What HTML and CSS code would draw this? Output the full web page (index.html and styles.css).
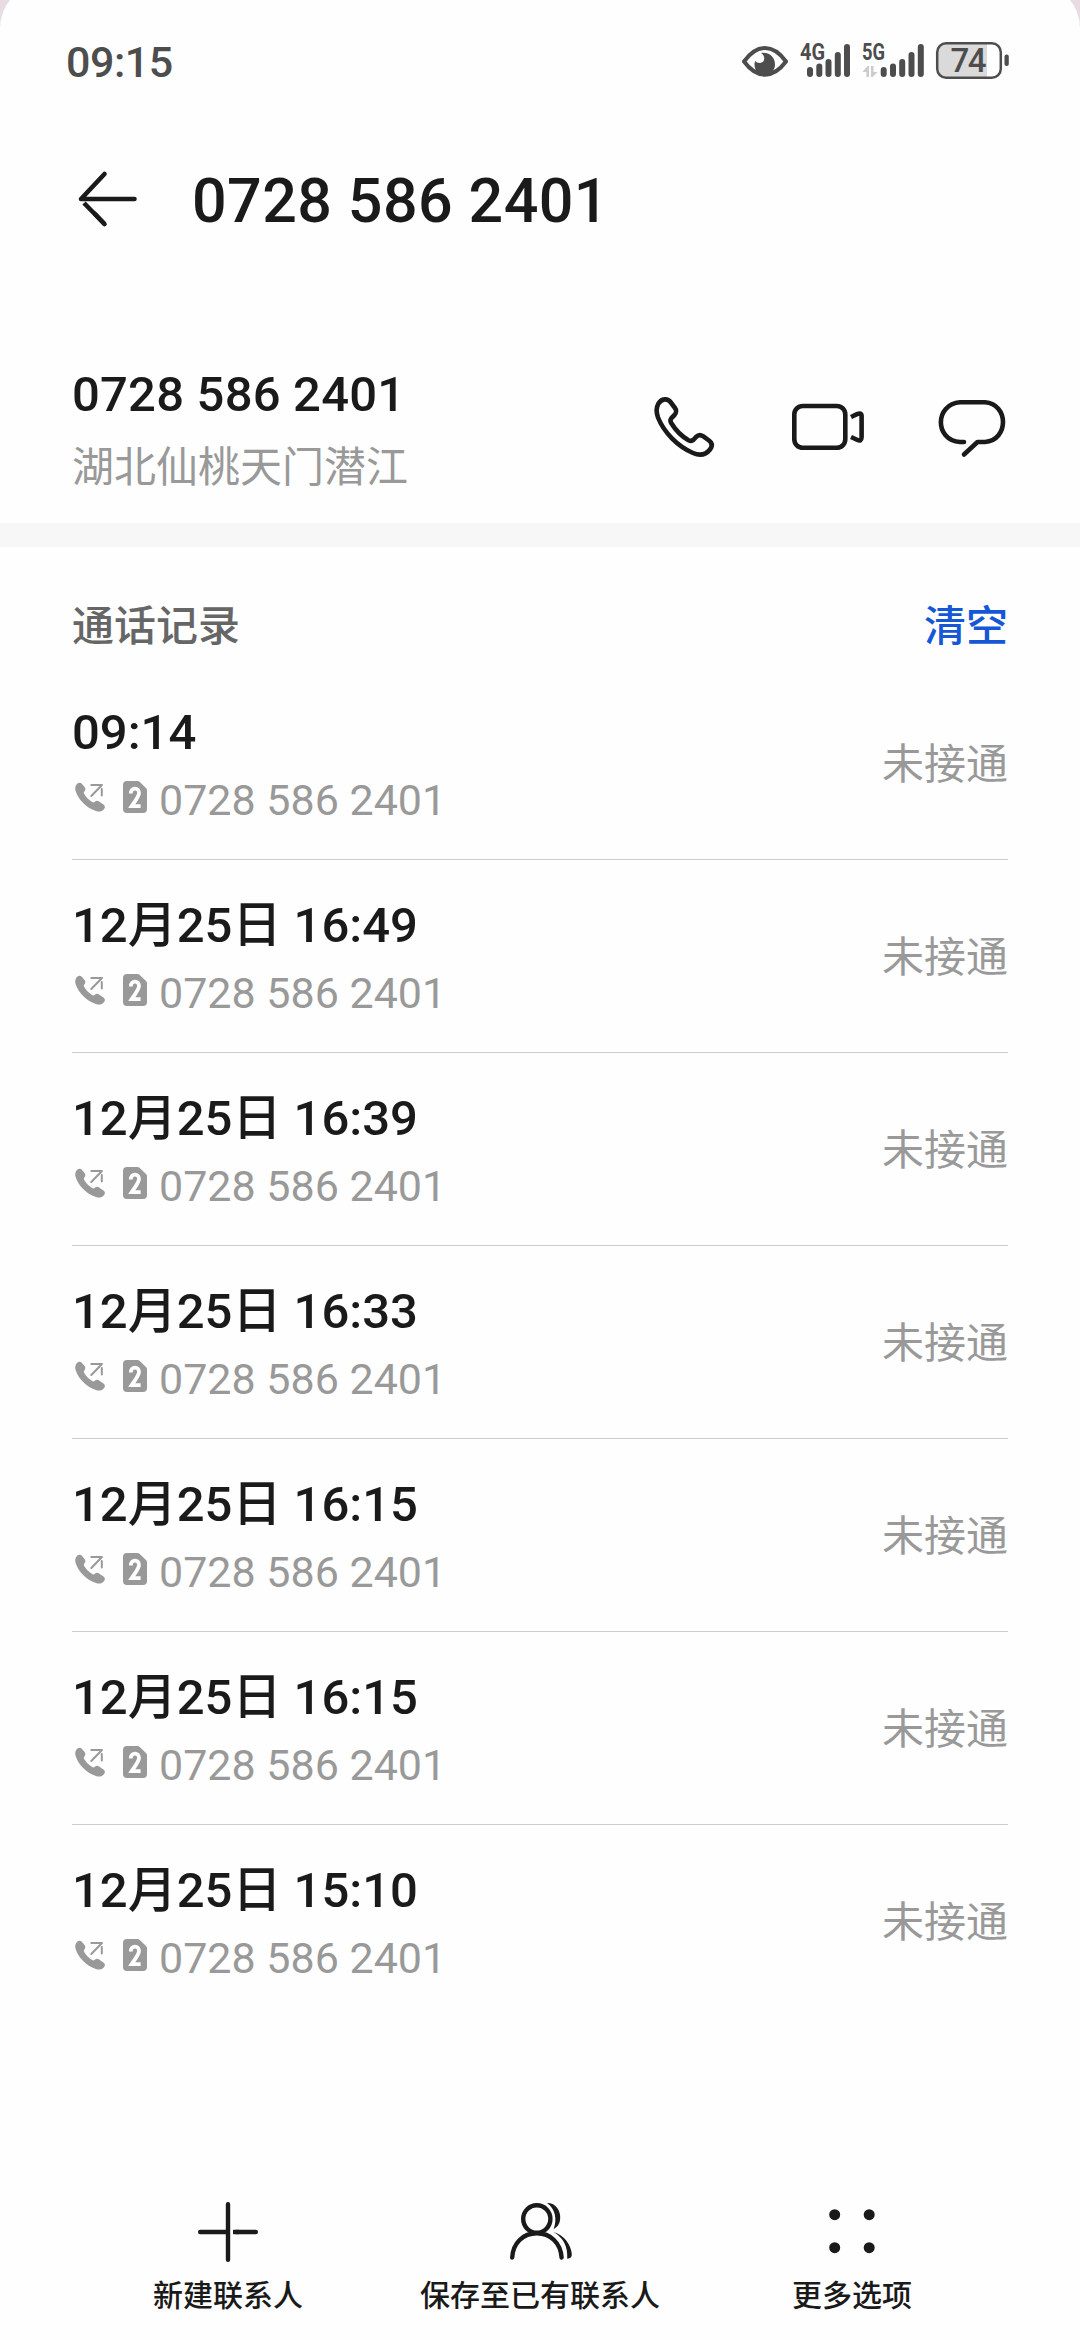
FILE: index.html
```html
<!DOCTYPE html>
<html lang="zh-CN">
<head>
<meta charset="utf-8">
<title>通话记录</title>
<link rel="stylesheet" href="styles.css">
</head>
<body>
<svg class="defs" width="0" height="0">
  <symbol id="out" viewBox="0 0 30 30">
    <path fill="#999" d="M2.2 1.8C3.6.3 5.6.3 6.8 1.7L9.6 5c1.1 1.4.9 3-.1 4.300-.7.9-1 1.600-.3 2.700 1.900 3.200 4.600 6 7.900 8 1.100.7 1.900.4 2.700-.3 1.300-1.100 2.900-1.200 4.300-.2l4.300 3c1.800 1.300 1.900 3.200.5 4.800-1.900 2.300-4.700 2.900-8 1.700C10.800 25.400 3.900 18 .8 9.500-.3 6.400.2 3.900 2.200 1.800z"/>
    <path fill="none" stroke="#999" stroke-width="2" stroke-linecap="round" d="M16.300 3h10.700M26.500 3.500L16.300 14M26.800 7v6.500"/>
  </symbol>
  <symbol id="sim" viewBox="0 0 24 32">
    <path fill="#999" d="M4 0h10.500a3 3 0 0 1 2 .8L23 7a3 3 0 0 1 1 2v19a4 4 0 0 1-4 4H4a4 4 0 0 1-4-4V4a4 4 0 0 1 4-4z"/>
    <path fill="none" stroke="#fff" stroke-width="3.800" d="M7.800 12.500C7.800 6 16 6 16 11.800c0 4-3.600 7.400-7.400 13.400h9"/>
  </symbol>
</svg>
<div class="screen">
  <header class="status">
    <span class="clock">09:15</span>
    <svg class="indicators" width="270" height="40" viewBox="740 40 270 40">
      <path fill="none" stroke="#4d4d4d" stroke-width="4" stroke-linejoin="round" d="M744 61.500C757 43.500 773 43.500 786 61.500C773 79 757 79 744 61.500z"/>
      <path fill="#4d4d4d" d="M761 53c8-1 14 4 14 11.500 0 6-4.500 10-10 10.500s-10.500-4-10.500-10.500c0-1.300.2-2.500.6-3.500 2.300 3 7.900 2.500 8.900-1 .8-3-.5-5.500-3-7z"/>
      <g fill="#4d4d4d" class="net"><text x="800" y="60" textLength="25" lengthAdjust="spacingAndGlyphs">4G</text><text x="862" y="60" textLength="23" lengthAdjust="spacingAndGlyphs">5G</text></g>
      <path stroke="#4d4d4d" stroke-width="6" stroke-linecap="round" d="M810 70v4M819.300 66.500v7.500M828.500 62v12M837.800 55v19M847 47v27M883.700 70v4M893 66.500v7.500M902.200 62v12M911.500 55v19M920.800 47v27"/>
      <path fill="#ccc" d="M862.500 72l5-6h1.500v11h-2.600v-5zM871 66h2.500v6h4L872.500 77H871z"/>
      <path fill="#dadada" d="M945 44h42v33h-42a7 7 0 0 1-7-7V51a7 7 0 0 1 7-7z"/>
      <rect x="937.200" y="43.200" width="63.600" height="34.600" rx="9" fill="none" stroke="#4d4d4d" stroke-width="2.500"/>
      <rect x="1004.500" y="54.500" width="4.300" height="11.500" rx="2" fill="#4d4d4d"/>
      <text class="pct" x="950.500" y="72" textLength="36">74</text>
    </svg>
  </header>

  <div class="titlebar">
    <svg width="60" height="60" viewBox="78 169 60 60" fill="none" stroke="#1a1a1a" stroke-width="4.600" stroke-linecap="round" stroke-linejoin="round"><path d="M134.500 199H81L104.500 174"/><path d="M104.500 224L84 203" stroke-linecap="butt"/><path d="M104.500 224L95 214"/></svg>
    <h1>0728 586 2401</h1>
  </div>

  <section class="contact">
    <div>
      <div class="number">0728 586 2401</div>
      <div class="place">湖北仙桃天门潜江</div>
    </div>
    <svg width="354" height="64" viewBox="654 395 354 64" fill="none" stroke="#1a1a1a" stroke-width="4.600" stroke-linecap="round" stroke-linejoin="round">
      <path d="M658.500 403.500C661.500 398.500 667.500 398 670.500 402L675 408C676.500 410 676.500 413 674.500 415L671.500 418C670 419.700 670.200 421.300 671.200 423C675.500 430 682 436.500 688.500 440.200C690.500 441.200 692 441.200 693.500 439.800L696 437C698 435 700.500 434.500 703 436.200L709 440.500C712.500 443.200 712.300 446.500 710 449.500C705.500 455.200 699.500 455.800 693 453C677.500 446.200 664 432.500 658 417.500C656.200 412.500 656 407.500 658.500 403.500z"/>
      <rect x="794.300" y="406" width="51" height="41.800" rx="8.500"/>
      <path stroke-linecap="butt" d="M851 417L857 414.200Q861.600 412.200 861.600 416V437Q861.600 442 857 439.800L851 437"/>
      <path d="M964 442H960C934 440 935 404 960 402.300H985C1009 404 1009 440 985 442H977.500L964 454.500"/>
    </svg>
  </section>

  <div class="band"></div>

  <section class="calls">
    <div class="callshead"><h2>通话记录</h2><a class="clear">清空</a></div>
    <ul>
      <li><div><div class="time">09:14</div><div class="via"><svg class="out"><use href="#out"/></svg><svg class="sim"><use href="#sim"/></svg><span>0728 586 2401</span></div></div><span class="state">未接通</span></li>
      <li><div><div class="time">12月25日 16:49</div><div class="via"><svg class="out"><use href="#out"/></svg><svg class="sim"><use href="#sim"/></svg><span>0728 586 2401</span></div></div><span class="state">未接通</span></li>
      <li><div><div class="time">12月25日 16:39</div><div class="via"><svg class="out"><use href="#out"/></svg><svg class="sim"><use href="#sim"/></svg><span>0728 586 2401</span></div></div><span class="state">未接通</span></li>
      <li><div><div class="time">12月25日 16:33</div><div class="via"><svg class="out"><use href="#out"/></svg><svg class="sim"><use href="#sim"/></svg><span>0728 586 2401</span></div></div><span class="state">未接通</span></li>
      <li><div><div class="time">12月25日 16:15</div><div class="via"><svg class="out"><use href="#out"/></svg><svg class="sim"><use href="#sim"/></svg><span>0728 586 2401</span></div></div><span class="state">未接通</span></li>
      <li><div><div class="time">12月25日 16:15</div><div class="via"><svg class="out"><use href="#out"/></svg><svg class="sim"><use href="#sim"/></svg><span>0728 586 2401</span></div></div><span class="state">未接通</span></li>
      <li><div><div class="time">12月25日 15:10</div><div class="via"><svg class="out"><use href="#out"/></svg><svg class="sim"><use href="#sim"/></svg><span>0728 586 2401</span></div></div><span class="state">未接通</span></li>
    </ul>
  </section>

  <nav class="toolbar">
    <div class="tool">
      <svg width="72" height="72" viewBox="192 2196 72 72" stroke="#1a1a1a" stroke-width="4.400" stroke-linecap="round" fill="none"><path d="M228 2204.200v55.600M200.200 2232H228M255.800 2232H236"/><path stroke-linecap="butt" d="M233 2232h6"/></svg>
      <span>新建联系人</span>
    </div>
    <div class="tool">
      <svg width="72" height="72" viewBox="504 2196 72 72" stroke="#1a1a1a" stroke-width="4.400" stroke-linecap="round" fill="none"><ellipse cx="536.800" cy="2219" rx="13.600" ry="13.700"/><path d="M512.200 2257.500C513 2243 523 2233.300 536.800 2233.300S560.600 2243 561.600 2257.500"/><path fill="#1a1a1a" stroke="none" d="M547 2203C556.500 2203 560.500 2211 560.200 2218C560 2224 557.500 2227 553.600 2229.200C557.500 2219 555 2208.500 547 2203zM553.500 2232C564.500 2235 571 2245 571.800 2254C572 2257 570.500 2258.500 567.200 2258.700C568 2246.500 563.500 2238 553.500 2232z"/></svg>
      <span>保存至已有联系人</span>
    </div>
    <div class="tool">
      <svg width="72" height="72" viewBox="816 2196 72 72" fill="#1a1a1a"><circle cx="834.700" cy="2214.700" r="5.500"/><circle cx="869.200" cy="2214.700" r="5.500"/><circle cx="834.700" cy="2247.700" r="5.500"/><circle cx="869.200" cy="2247.700" r="5.500"/></svg>
      <span>更多选项</span>
    </div>
  </nav>
</div>
</body>
</html>
```
FILE: styles.css
```css
* { box-sizing: border-box; }
body, h1, h2, ul { margin: 0; padding: 0; }
body {
  height: 2340px;
  overflow: hidden;
  background: #e8dce2;
  color: #1a1a1a;
  font-family: Roboto, "Noto Sans CJK SC", sans-serif;
}
svg { display: block; flex: none; }
.defs { position: absolute; }
.screen {
  width: 1080px;
  height: 2356px;
  margin-top: -16px;
  padding-top: 16px;
  display: flex;
  flex-direction: column;
  background: #fefefe;
  border-radius: 44px 44px 0 0;
  overflow: hidden;
}
.status {
  height: 120px;
  padding: 0 70px 0 66px;
  display: flex;
  align-items: center;
  justify-content: space-between;
}
.clock { font-size: 43px; font-weight: 500; color: #4d4d4d; line-height: 60px; margin-top: 4px; letter-spacing: -0.5px; }
.net { font-size: 23px; font-weight: 700; }
.pct { font-size: 33px; font-weight: 500; fill: #4d4d4d; }
.titlebar {
  height: 158px;
  padding-left: 78px;
  display: flex;
  align-items: center;
  gap: 54px;
}
h1 { font-size: 61px; font-weight: 500; line-height: 80px; letter-spacing: 0.4px; padding-top: 4px; }
.contact {
  height: 245px;
  padding: 82px 72px 0;
  display: flex;
  justify-content: space-between;
}
.contact svg { margin-top: 35px; }
.number, .time { font-size: 49px; font-weight: 500; line-height: 67px; letter-spacing: 0.2px; }
.time { letter-spacing: 0; }
.number { padding-top: 1px; }
.place { font-size: 42px; line-height: 80px; color: #999; }
.band { height: 24px; background: #f7f7f7; }
.calls { padding: 0 72px; }
.callshead { height: 120px; padding-top: 50px; display: flex; justify-content: space-between; }
h2, .clear { font-size: 42px; font-weight: 500; line-height: 60px; color: #666; }
.clear { color: #1557d6; }
ul { list-style: none; }
li {
  height: 193px;
  padding-top: 6px;
  display: flex;
  justify-content: space-between;
  align-items: center;
  border-bottom: 1px solid #ccc;
}
li:last-child { border-bottom-color: transparent; }
.via { display: flex; align-items: center; font-size: 43px; line-height: 67px; color: #999; }
.via span { padding-top: 1px; }
.out { width: 30px; height: 30px; margin: 0 18px 5px 3px; }
.sim { width: 24px; height: 32px; margin: 0 12px 5px 0; }
.state { font-size: 42px; line-height: 60px; color: #999; margin-top: -2px; }
.toolbar {
  margin-top: auto;
  height: 144px;
  padding: 0 72px;
  display: grid;
  grid-template-columns: repeat(3, 1fr);
}
.tool { display: flex; flex-direction: column; align-items: center; font-size: 30px; font-weight: 500; line-height: 55px; }
```
